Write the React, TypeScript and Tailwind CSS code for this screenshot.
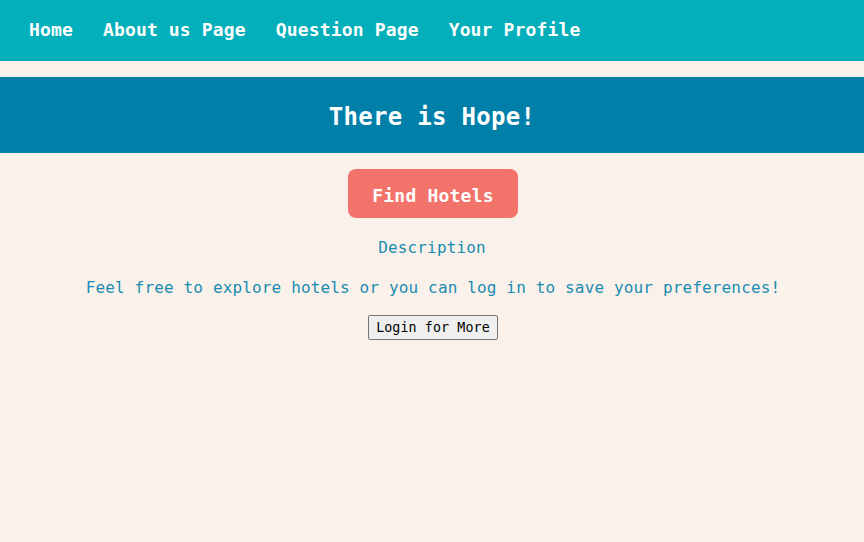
import React from "react";

export default function App() {
  const mono = { fontFamily: '"DejaVu Sans Mono", "Liberation Mono", monospace' };
  return (
    <div className="min-h-[542px] w-full bg-[#faf1eb]" style={mono}>
      <nav className="flex h-[61px] items-center gap-[30px] bg-[#03afba] pb-[2px] pl-[29px] text-[18px] font-bold text-white tracking-[0.15px]">
        <span>Home</span>
        <span>About us Page</span>
        <span>Question Page</span>
        <span>Your Profile</span>
      </nav>
      <header className="mt-4 flex h-[76px] items-center justify-center bg-[#0080a8] pt-[3px] text-[24px] font-bold text-white tracking-[0.3px]">
        There is Hope!
      </header>
      <main className="flex flex-col items-center">
        <button className="mt-4 ml-[2px] flex h-[49px] w-[170px] items-center justify-center rounded-[8px] bg-[#f2736a] pt-[3px] text-[18px] font-bold text-white tracking-[0.2px]">
          Find Hotels
        </button>
        <p className="mt-[20px] text-[16px] leading-[20px] text-[#1b8cb1] tracking-[0.15px]">Description</p>
        <p className="mt-[20px] ml-[2px] text-[16px] leading-[20px] text-[#1b8cb1] tracking-[0.15px]">
          Feel free to explore hotels or you can log in to save your preferences!
        </p>
        <button className="mt-[17px] ml-[2px] h-[25px] rounded-[2px] border border-[#767676] bg-[#efefef] px-[7px] text-[13.33px] text-black tracking-[0.1px]">
          Login for More
        </button>
      </main>
    </div>
  );
}
